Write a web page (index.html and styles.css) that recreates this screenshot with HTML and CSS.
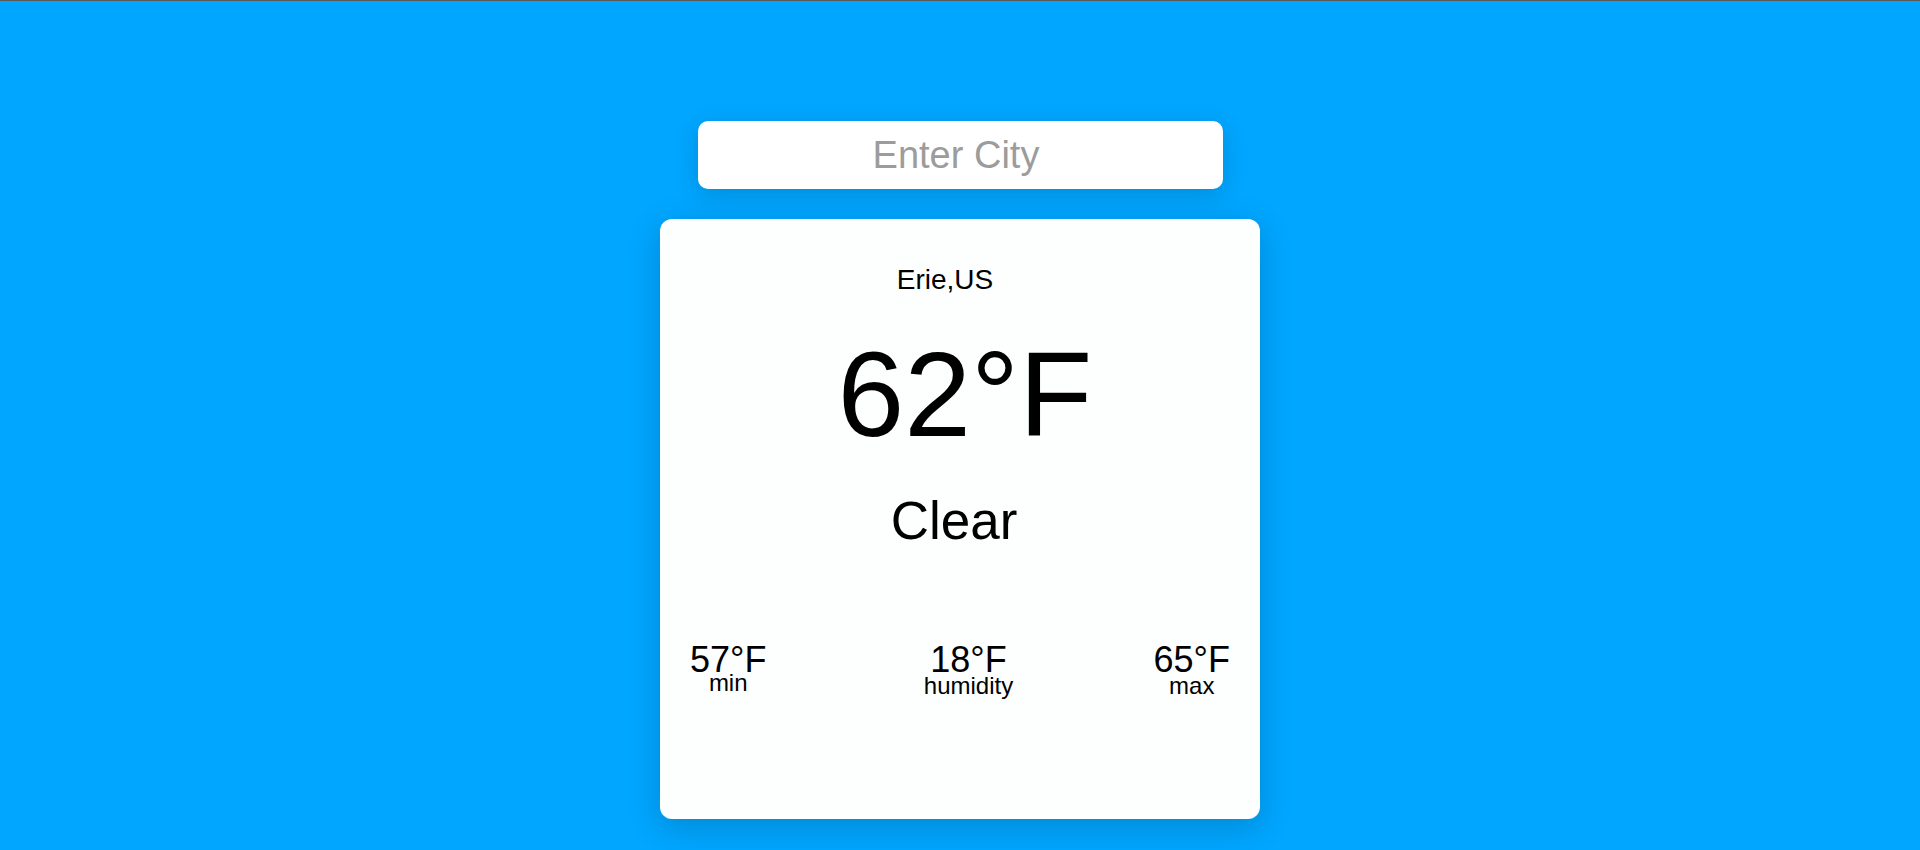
FILE: index.html
```html
<!DOCTYPE html>
<html lang="en">
<head>
<meta charset="utf-8">
<title>Weather</title>
<link rel="stylesheet" href="styles.css">
</head>
<body>
<div class="topline"></div>
<main class="app">
  <input class="search" type="text" placeholder="Enter City">
  <section class="card">
    <p class="location">Erie,US</p>
    <p class="temp">62°F</p>
    <p class="desc">Clear</p>
    <div class="stats">
      <div class="stat">
        <span class="stat-value">57°F</span>
        <span class="stat-label stat-label--raised">min</span>
      </div>
      <div class="stat stat--middle">
        <span class="stat-value">18°F</span>
        <span class="stat-label">humidity</span>
      </div>
      <div class="stat">
        <span class="stat-value">65°F</span>
        <span class="stat-label">max</span>
      </div>
    </div>
  </section>
</main>
</body>
</html>
```
FILE: styles.css
```css
html, body {
  margin: 0;
  padding: 0;
  height: 100%;
}
body {
  background: #00a6ff;
  font-family: "Liberation Sans", Arial, sans-serif;
  color: #000;
  overflow: hidden;
}
.topline {
  height: 1px;
  background: #5a5a5a;
}
.app {
  display: flex;
  flex-direction: column;
  align-items: center;
  padding-top: 120px;
  gap: 30px;
}
.search {
  box-sizing: border-box;
  width: 525px;
  height: 68px;
  border: none;
  border-radius: 10px;
  background: #fff;
  font-family: "Liberation Sans", Arial, sans-serif;
  font-size: 38px;
  text-align: center;
  outline: none;
  box-shadow: 0 6px 24px rgba(0, 0, 0, 0.15);
  padding: 0 18px 0 10px;
}
.search::placeholder {
  color: #9c9c9c;
}
.card {
  box-sizing: border-box;
  width: 600px;
  height: 600px;
  background: #fdfefe;
  border-radius: 12px;
  box-shadow: 0 8px 32px rgba(0, 0, 0, 0.18);
  padding: 45px 30px 0;
  display: flex;
  flex-direction: column;
  align-items: center;
}
.card p {
  margin: 0;
  line-height: normal;
}
.location {
  font-size: 28px;
  margin-right: 30px !important;
}
.temp {
  font-size: 120px;
  margin-top: 29px !important;
  margin-left: 10px !important;
}
.desc {
  font-size: 53px;
  margin-top: 27px !important;
  margin-right: 12px !important;
}
.stats {
  align-self: stretch;
  display: flex;
  justify-content: space-between;
  margin-top: 94px;
}
.stat {
  display: flex;
  flex-direction: column;
  align-items: center;
}
.stat--middle {
  margin-left: 17px;
}
.stat-value {
  font-size: 36px;
  line-height: 30px;
}
.stat-label {
  font-size: 24px;
  line-height: 20px;
  margin-top: 1px;
}
.stat-label--raised {
  margin-top: -2px;
}
```
